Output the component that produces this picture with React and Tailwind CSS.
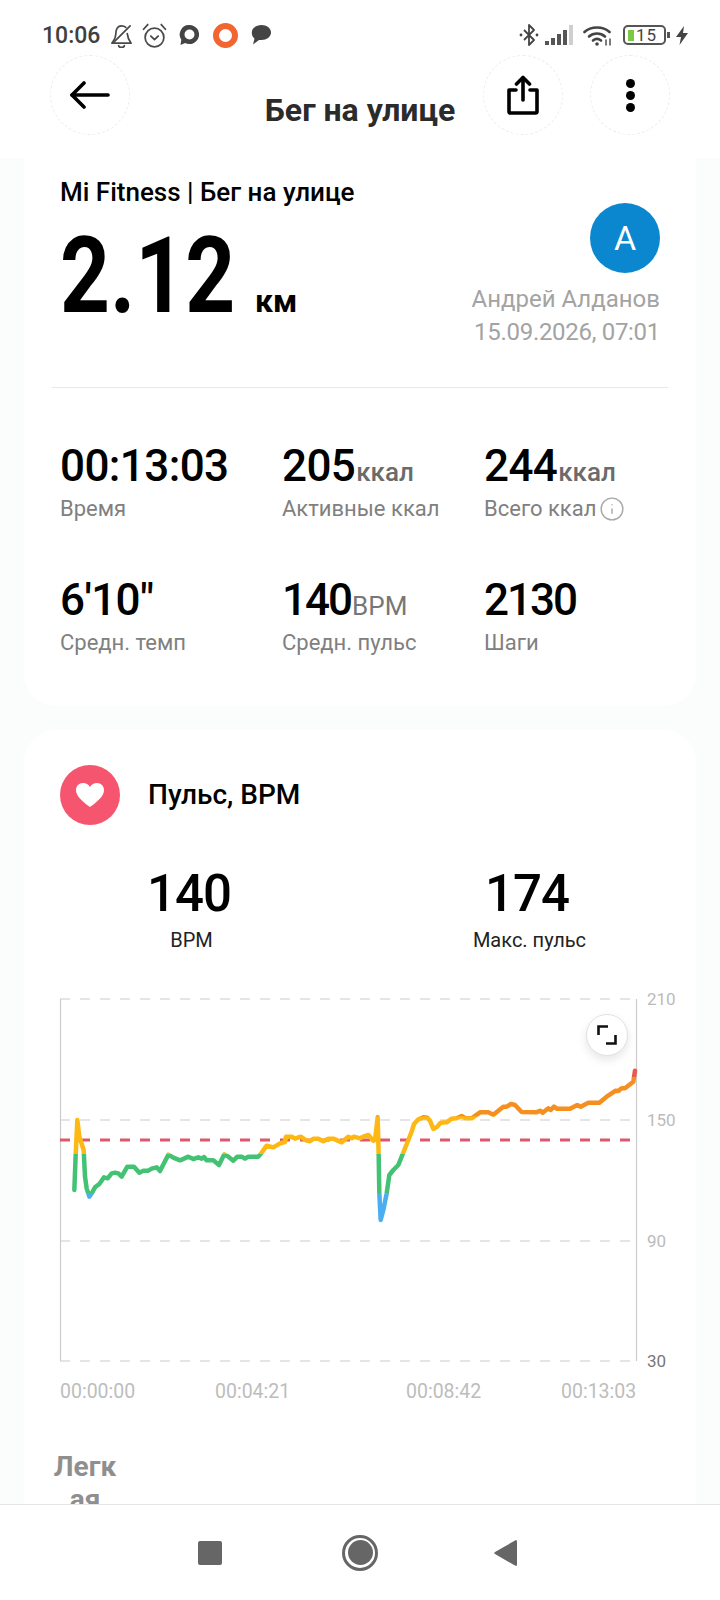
import React from "react";
import { Info } from "lucide-react";

// chart points as read off the reference, page coordinates
const leftPart = [
  [103, 630], [107, 525], [112, 420], [118, 470], [131, 510], [135, 590], [140, 625], [148, 650], [158, 635], [165, 622],
  [178, 612], [192, 592], [203, 595], [215, 580], [225, 578], [235, 580], [245, 590], [262, 560], [282, 560], [298, 578],
  [310, 572], [325, 572], [335, 566], [350, 562], [360, 573], [385, 524], [400, 533], [420, 541], [432, 536], [445, 530],
  [460, 537], [475, 532], [485, 536], [492, 531], [500, 541], [520, 541], [537, 555], [553, 523], [565, 530], [580, 542],
  [592, 530], [605, 530], [615, 536], [625, 530], [655, 530], [665, 518], [680, 497], [700, 502], [720, 490], [735, 486],
  [738, 470], [755, 470], [765, 476], [782, 470], [800, 482], [810, 484], [820, 476], [835, 476], [850, 484], [865, 476],
  [880, 476], [905, 487], [925, 470], [935, 475], [942, 470], [960, 475], [970, 470], [985, 465], [1000, 482], [1005, 480],
].map(([x, y]) => [40 + x / 3, 980 + y / 3]);

const rightPart = [
  [83, 412], [86, 525], [88, 640], [92, 720], [100, 690], [110, 640], [118, 585], [130, 570], [145, 555], [155, 530],
  [165, 505], [175, 480], [185, 455], [192, 432], [205, 418], [220, 412], [232, 413], [240, 422], [250, 447], [262, 440],
  [272, 428], [290, 427], [305, 416], [320, 415], [335, 408], [345, 414], [365, 415], [390, 397], [415, 397], [430, 404],
  [460, 380], [470, 380], [483, 372], [495, 375], [515, 396], [560, 397], [570, 392], [578, 398], [595, 385], [602, 390],
  [612, 380], [620, 386], [660, 386], [682, 375], [692, 380], [715, 368], [748, 368], [770, 350], [797, 332], [805, 333],
  [815, 325], [825, 325], [850, 305], [855, 272],
].map(([x, y]) => [350 + x / 3, 980 + y / 3]);

const heartLine = [...leftPart, ...rightPart].map((p) => p.join(",")).join(" ");

const stats = [
  { value: "00:13:03", valueClass: "tracking-[-0.6px]", label: "Время" },
  { value: "205", valueClass: "tracking-[-0.6px]", unit: "ккал", unitClass: "font-medium text-[#6b6b6b]", label: "Активные ккал" },
  { value: "244", valueClass: "tracking-[-0.6px]", unit: "ккал", unitClass: "font-medium text-[#6b6b6b]", label: "Всего ккал", info: true },
  { value: "6'10\"", valueClass: "tracking-[-0.6px]", label: "Средн. темп" },
  { value: "140", valueClass: "tracking-[-2px]", unit: "BPM", unitClass: "font-normal text-[#777777]", label: "Средн. пульс" },
  { value: "2130", valueClass: "tracking-[-2px]", label: "Шаги" },
];

function BellOffIcon() {
  return (
    <svg width="23" height="25" viewBox="0 0 24 26" fill="none" stroke="#4a4a4a" strokeWidth="1.8" strokeLinecap="round" strokeLinejoin="round">
      <path d="M16.5 4.5C15.3 3.5 13.8 3 12 3C7 3 6 8 6 12C6 16 4 18 2 21H22C20 18 18.5 16 18 11" />
      <path d="M21 3L4 20" />
      <path d="M9 23.5a3 2 0 0 0 6 0" />
    </svg>
  );
}

function AlarmIcon() {
  return (
    <svg width="25" height="25" viewBox="0 0 24 24" fill="none" stroke="#4a4a4a" strokeWidth="1.7" strokeLinecap="round" strokeLinejoin="round">
      <circle cx="12" cy="14" r="9" />
      <path d="M8.5 12.5L12 16L15.5 12.5" />
      <path d="M1.5 6L5.5 1.5" />
      <path d="M22.5 6L18.5 1.5" />
    </svg>
  );
}

function ChatRingIcon() {
  return (
    <svg width="21" height="20" viewBox="0 0 21 20">
      <path fill="#444" fillRule="evenodd" d="M10.500 0a9.500 9.500 0 1 1-4.400 17.900L1.500 20l.8-5.200A9.500 9.500 0 0 1 10.500 0zm0 4.500a5 5 0 1 0 0 10a5 5 0 0 0 0-10z" />
    </svg>
  );
}

function ChatSolidIcon() {
  return (
    <svg width="20" height="20" viewBox="0 0 20 20">
      <path fill="#444" d="M10.500 0C15.500 0 20 3 20 7.500S15.500 15 10.500 15H8L2 19.500L3.500 13.500C1.500 12 .8 10 .8 7.500C.8 3 5.500 0 10.500 0z" />
    </svg>
  );
}

function BluetoothIcon() {
  return (
    <svg width="20" height="24" viewBox="0 0 20 24" fill="none" stroke="#444" strokeWidth="1.8" strokeLinejoin="round">
      <path d="M5 7L15 17L10 22V2L15 7L5 17" />
      <circle cx="2" cy="12" r="1.400" fill="#444" stroke="none" />
      <circle cx="18" cy="12" r="1.400" fill="#444" stroke="none" />
    </svg>
  );
}

function SignalIcon() {
  return (
    <div className="flex h-[20px] w-[28px] items-end gap-[2px]">
      <div className="h-[4px] w-[4px] bg-[#555555]" />
      <div className="h-[7px] w-[4px] bg-[#555555]" />
      <div className="h-[11px] w-[4px] bg-[#555555]" />
      <div className="h-[15px] w-[4px] bg-[#555555]" />
      <div className="h-[20px] w-[4px] bg-[#cfcfcf]" />
    </div>
  );
}

function WifiIcon() {
  return (
    <svg width="30" height="21" viewBox="0 0 30 21" fill="none" stroke="#444" strokeWidth="2.600" strokeLinecap="round">
      <path d="M1.500 7C8 1 20 1 26.500 7" />
      <path d="M6 11.500C10.500 7.500 17.500 7.500 22 11.500" />
      <path d="M10 15.500C12.500 13.500 15.500 13.500 18 15.500" />
      <circle cx="14" cy="19" r="1.800" fill="#444" stroke="none" />
      <path d="M23 15V20M27 14V20" strokeWidth="1.400" />
    </svg>
  );
}

function BoltIcon() {
  return (
    <svg width="12" height="19" viewBox="0 0 12 19">
      <path fill="#444" d="M8 0L0 11H5L3.500 19L12 7H7z" />
    </svg>
  );
}

function StatusBar() {
  return (
    <div className="flex h-[55px] items-center justify-between pt-[15px] pl-[42px] pr-[32px]">
      <div className="flex items-center">
        <span className="text-[23px] font-medium leading-none text-[#3f3f3f]">10:06</span>
        <span className="ml-[10px]"><BellOffIcon /></span>
        <span className="ml-[9px]"><AlarmIcon /></span>
        <span className="ml-[12px]"><ChatRingIcon /></span>
        <div className="ml-[13px] h-[25px] w-[25px] rounded-full border-[6px] border-[#f26430]" />
        <span className="ml-[13px]"><ChatSolidIcon /></span>
      </div>
      <div className="flex items-center">
        <BluetoothIcon />
        <div className="ml-[6px]"><SignalIcon /></div>
        <div className="ml-[10px]"><WifiIcon /></div>
        <div className="ml-[10px] flex items-center">
          <div className="flex h-[20px] w-[43px] items-center rounded-[5px] border-2 border-[#555555] pl-[3px]">
            <div className="h-[11px] w-[6px] bg-[#7ac943]" />
            <span className="ml-[2px] text-[17px] leading-none tracking-[1px] text-[#444444]">15</span>
          </div>
          <div className="ml-[1px] h-[6px] w-[3px] bg-[#555555]" />
        </div>
        <div className="ml-[6px]"><BoltIcon /></div>
      </div>
    </div>
  );
}

function RoundButton({ children }) {
  return (
    <div className="flex h-20 w-20 items-center justify-center rounded-full border border-dashed border-[#ececec]">
      {children}
    </div>
  );
}

function Header() {
  return (
    <div className="h-[158px] bg-white">
      <StatusBar />
      <div className="grid grid-cols-[1fr_auto_1fr] px-[50px]">
        <RoundButton>
          <svg width="40" height="28" viewBox="0 0 40 28" fill="none" stroke="#000" strokeWidth="3.600" strokeLinecap="round" strokeLinejoin="round">
            <path d="M38 14H2" />
            <path d="M14 2L2 14L14 26" />
          </svg>
        </RoundButton>
        <div className="pt-[37px] text-[32px] font-bold leading-[36px] text-[#2b2b2b]">Бег на улице</div>
        <div className="flex justify-end gap-[27px]">
          <RoundButton>
            <svg width="34" height="40" viewBox="0 0 34 40" fill="none" stroke="#000" strokeWidth="3.600" strokeLinecap="round" strokeLinejoin="round">
              <path d="M10 15H3V36.500C3 37.500 3.500 38 4.500 38H29.500C30.500 38 31 37.500 31 36.500V15H24" />
              <path d="M17 25V3" />
              <path d="M10.500 9L17 2.500L23.500 9" />
            </svg>
          </RoundButton>
          <RoundButton>
            <div className="flex flex-col gap-[3px]">
              <div className="h-[9px] w-[9px] rounded-full bg-black" />
              <div className="h-[9px] w-[9px] rounded-full bg-black" />
              <div className="h-[9px] w-[9px] rounded-full bg-black" />
            </div>
          </RoundButton>
        </div>
      </div>
    </div>
  );
}

function SummaryCard() {
  return (
    <div className="rounded-b-[32px] bg-white pb-[49px]">
      <div className="flex justify-between pt-[18px] pl-9 pr-9">
        <div>
          <div className="text-[26px] font-medium leading-8 text-black">Mi Fitness | Бег на улице</div>
          <div className="mt-[16px] flex items-baseline">
            <span className="inline-block w-[195px] origin-left scale-x-[0.83] whitespace-nowrap text-[105px] font-bold leading-none text-black">2.12</span>
            <span className="text-[32px] font-bold leading-none text-black">км</span>
          </div>
        </div>
        <div className="flex flex-col items-end pt-[27px]">
          <div className="flex h-[70px] w-[70px] items-center justify-center rounded-full bg-[#0a87cf] text-[34px] leading-none text-white">А</div>
          <div className="mt-[10px] text-[24px] leading-[33px] text-[#a3a3a3]">Андрей Алданов</div>
          <div className="text-[24px] leading-[33px] tracking-[-0.3px] text-[#a3a3a3]">15.09.2026, 07:01</div>
        </div>
      </div>

      <div className="mx-7 mt-[38px] h-px bg-[#e8e8e8]" />

      <div className="mt-[55px] grid grid-cols-[222px_202px_1fr] gap-y-[54px] pl-9">
        {stats.map((s) => (
          <div key={s.label}>
            <div className={"flex items-baseline text-[44px] font-medium leading-[46px] text-black " + s.valueClass}>
              {s.value}
              {s.unit && <span className={"ml-[1px] text-[26px] leading-none tracking-normal " + s.unitClass}>{s.unit}</span>}
            </div>
            <div className="mt-[6px] flex items-center text-[22px] leading-7 text-[#808080]">
              {s.label}
              {s.info && <Info className="ml-[3px] text-[#a8a8a8]" size={26} strokeWidth={1.3} />}
            </div>
          </div>
        ))}
      </div>
    </div>
  );
}

function HeartChart() {
  const gridLines = [999, 1120, 1241, 1361];
  const labels = [
    { y: 999, text: "210", fill: "#bbbbbb" },
    { y: 1120, text: "150", fill: "#bbbbbb" },
    { y: 1241, text: "90", fill: "#bbbbbb" },
    { y: 1361, text: "30", fill: "#777777" },
  ];

  return (
    <div className="relative mt-[31px] h-[385px] w-[672px]">
      <svg width="672" height="385" viewBox="24 985 672 385" fontFamily="Roboto, sans-serif">
        <defs>
          <linearGradient id="zones" gradientUnits="userSpaceOnUse" x1="0" y1="1070" x2="0" y2="1230">
            <stop offset="0.0437" stopColor="#e85a4f" />
            <stop offset="0.0438" stopColor="#f58f1f" />
            <stop offset="0.29" stopColor="#f58f1f" />
            <stop offset="0.291" stopColor="#fdb813" />
            <stop offset="0.525" stopColor="#fdb813" />
            <stop offset="0.526" stopColor="#43c273" />
            <stop offset="0.77" stopColor="#43c273" />
            <stop offset="0.771" stopColor="#4aaef0" />
          </linearGradient>
        </defs>
        {gridLines.map((y) => (
          <line key={y} x1="60" x2="632" y1={y} y2={y} stroke="#cccccc" strokeWidth="1.2" strokeDasharray="10 10" />
        ))}
        <line x1="60.5" x2="60.5" y1="999" y2="1361" stroke="#cccccc" strokeWidth="1.2" />
        <line x1="636.5" x2="636.5" y1="999" y2="1361" stroke="#cccccc" strokeWidth="1.2" />
        <line x1="60" x2="632" y1="1140" y2="1140" stroke="#e0566a" strokeWidth="3" strokeDasharray="10 10" />
        <polyline points={heartLine} fill="none" stroke="url(#zones)" strokeWidth="4.5" strokeLinecap="round" strokeLinejoin="round" />
        {labels.map((l) => (
          <text key={l.text} x="647" y={l.y} dy="6" fontSize="17" fill={l.fill}>{l.text}</text>
        ))}
      </svg>
      <div className="absolute left-[562px] top-[29px] flex h-[42px] w-[42px] items-center justify-center rounded-full border border-[#e2e2e2] bg-white shadow-[0_4px_10px_rgba(0,0,0,0.1)]">
        <svg width="20" height="20" viewBox="0 0 20 20" fill="none" stroke="#111" strokeWidth="2.600">
          <path d="M1.500 10V1.500H11" />
          <path d="M18.500 10V18.500H9" />
        </svg>
      </div>
    </div>
  );
}

function PulseCard() {
  return (
    <div className="mt-6 rounded-t-[32px] bg-white pt-[35px]">
      <div className="flex items-center gap-[28px] pl-9">
        <div className="flex h-[60px] w-[60px] items-center justify-center rounded-full bg-[#f5556f]">
          <svg width="30" height="26" viewBox="0 0 30 26">
            <path fill="#fff" d="M15 25C5 18 1 13 1 8C1 4 4 1 8 1C11 1 13.500 2.500 15 5C16.500 2.500 19 1 22 1C26 1 29 4 29 8C29 13 25 18 15 25Z" />
          </svg>
        </div>
        <div className="text-[28px] font-medium leading-8 text-black">Пульс, BPM</div>
      </div>

      <div className="ml-9 mt-[42px] grid w-[596px] grid-cols-2 gap-x-20 text-center">
        <div>
          <div className="text-[51px] font-medium leading-[53px] tracking-[-1px] text-black">140</div>
          <div className="mt-[6px] pl-[5px] text-[20px] leading-7 text-[#222222]">BPM</div>
        </div>
        <div>
          <div className="text-[51px] font-medium leading-[53px] tracking-[-1px] text-black">174</div>
          <div className="mt-[6px] pl-[5px] text-[20px] leading-7 text-[#222222]">Макс. пульс</div>
        </div>
      </div>

      <HeartChart />

      <div className="ml-9 mt-[10px] grid grid-cols-[155px_191px_155px_auto] text-[19.5px] leading-6 text-[#bdbdbd]">
        <span>00:00:00</span>
        <span>00:04:21</span>
        <span>00:08:42</span>
        <span>00:13:03</span>
      </div>

      <div className="ml-7 mt-[46px] w-[66px] break-all text-center text-[28px] font-bold leading-[33px] text-[#8f8f8f]">Легкая</div>
    </div>
  );
}

function NavBar() {
  return (
    <div className="flex h-[96px] items-center border-t border-[#e5e5e5] bg-white pl-[198px]">
      <div className="h-[24px] w-[24px] rounded-[2px] bg-[#666666]" />
      <div className="ml-[120px] flex h-9 w-9 items-center justify-center rounded-full border-[3px] border-[#666666]">
        <div className="h-[25px] w-[25px] rounded-full bg-[#666666]" />
      </div>
      <svg className="ml-[116px]" width="23" height="26" viewBox="0 0 23 26">
        <path fill="#666" d="M23 1V25C23 26 22 26 21 25.500L1 14C0 13.500 0 12.500 1 12L21 .5C22 0 23 0 23 1Z" />
      </svg>
    </div>
  );
}

export default function App() {
  return (
    <div className="flex h-[1600px] w-[720px] flex-col overflow-hidden bg-white font-[Roboto,sans-serif]">
      <Header />
      <div className="h-[1346px] overflow-hidden bg-[#fbfcfc] px-6">
        <SummaryCard />
        <PulseCard />
      </div>
      <NavBar />
    </div>
  );
}
